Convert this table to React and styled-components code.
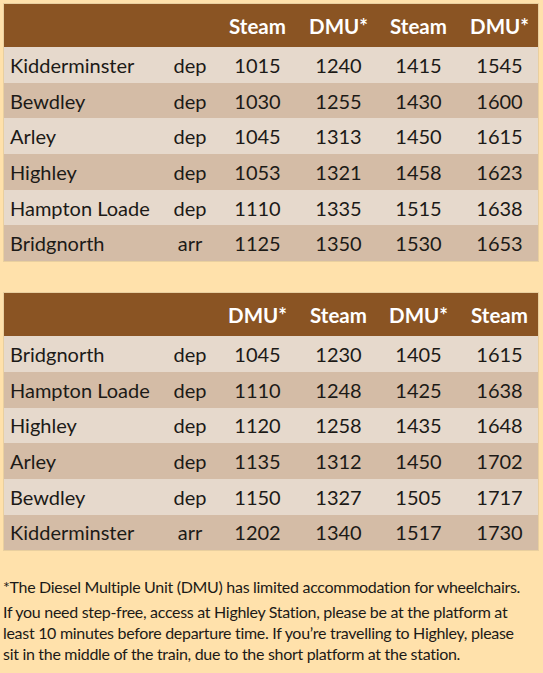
import React from "react";
import styled, { createGlobalStyle } from "styled-components";

const Global = createGlobalStyle`
  html, body {
    margin: 0;
    padding: 0;
    background: #ffe1ab;
  }
  body {
    font-family: Lato, "Open Sans", sans-serif;
    color: #1c1a17;
  }
`;

const Page = styled.div`
  padding: 3px 4px 0 3px;
  display: flex;
  flex-direction: column;
`;

const Timetable = styled.div`
  display: grid;
  grid-template-columns: 162px 48px 87px 75px 85px 1fr;
  border: 1px solid #e9cf9f;
  margin-bottom: ${(p) => p.$gap || 0}px;
`;

const HeadRow = styled.div`
  display: contents;
  & > div {
    background: #8a5423;
    color: #fff;
    font-weight: 700;
    font-size: 20.5px;
    height: 43px;
  }
`;

const Row = styled.div`
  display: contents;
  & > div {
    background: ${(p) => (p.$alt ? "#d4bca6" : "#e6d9cc")};
    height: 35.7px;
  }
`;

const Cell = styled.div`
  display: flex;
  align-items: center;
  justify-content: ${(p) => (p.$left ? "flex-start" : "center")};
  padding-left: ${(p) => (p.$left ? "6px" : "0")};
  font-size: 20px;
  white-space: nowrap;
`;

const Notes = styled.div`
  padding: 25px 12px 0 0;
  font-size: 16px;
  letter-spacing: -0.3px;
  line-height: 21px;
`;

const Note = styled.p`
  margin: 0 0 4px 0;
`;

const down = {
  heads: ["Steam", "DMU*", "Steam", "DMU*"],
  rows: [
    ["Kidderminster", "dep", "1015", "1240", "1415", "1545"],
    ["Bewdley", "dep", "1030", "1255", "1430", "1600"],
    ["Arley", "dep", "1045", "1313", "1450", "1615"],
    ["Highley", "dep", "1053", "1321", "1458", "1623"],
    ["Hampton Loade", "dep", "1110", "1335", "1515", "1638"],
    ["Bridgnorth", "arr", "1125", "1350", "1530", "1653"],
  ],
};

const up = {
  heads: ["DMU*", "Steam", "DMU*", "Steam"],
  rows: [
    ["Bridgnorth", "dep", "1045", "1230", "1405", "1615"],
    ["Hampton Loade", "dep", "1110", "1248", "1425", "1638"],
    ["Highley", "dep", "1120", "1258", "1435", "1648"],
    ["Arley", "dep", "1135", "1312", "1450", "1702"],
    ["Bewdley", "dep", "1150", "1327", "1505", "1717"],
    ["Kidderminster", "arr", "1202", "1340", "1517", "1730"],
  ],
};

function Table({ data, gap }) {
  return (
    <Timetable $gap={gap}>
      <HeadRow>
        <Cell />
        <Cell />
        {data.heads.map((h, i) => (
          <Cell key={i}>{h}</Cell>
        ))}
      </HeadRow>
      {data.rows.map((r, i) => (
        <Row key={i} $alt={i % 2 === 1}>
          {r.map((c, j) => (
            <Cell key={j} $left={j === 0}>
              {c}
            </Cell>
          ))}
        </Row>
      ))}
    </Timetable>
  );
}

export default function App() {
  return (
    <>
      <Global />
      <Page>
        <Table data={down} gap={30} />
        <Table data={up} />
        <Notes>
          <Note>*The Diesel Multiple Unit (DMU) has limited accommodation for wheelchairs.</Note>
          <Note>
            If you need step-free, access at Highley Station, please be at the platform at
            least 10 minutes before departure time. If you’re travelling to Highley, please
            sit in the middle of the train, due to the short platform at the station.
          </Note>
        </Notes>
      </Page>
    </>
  );
}
